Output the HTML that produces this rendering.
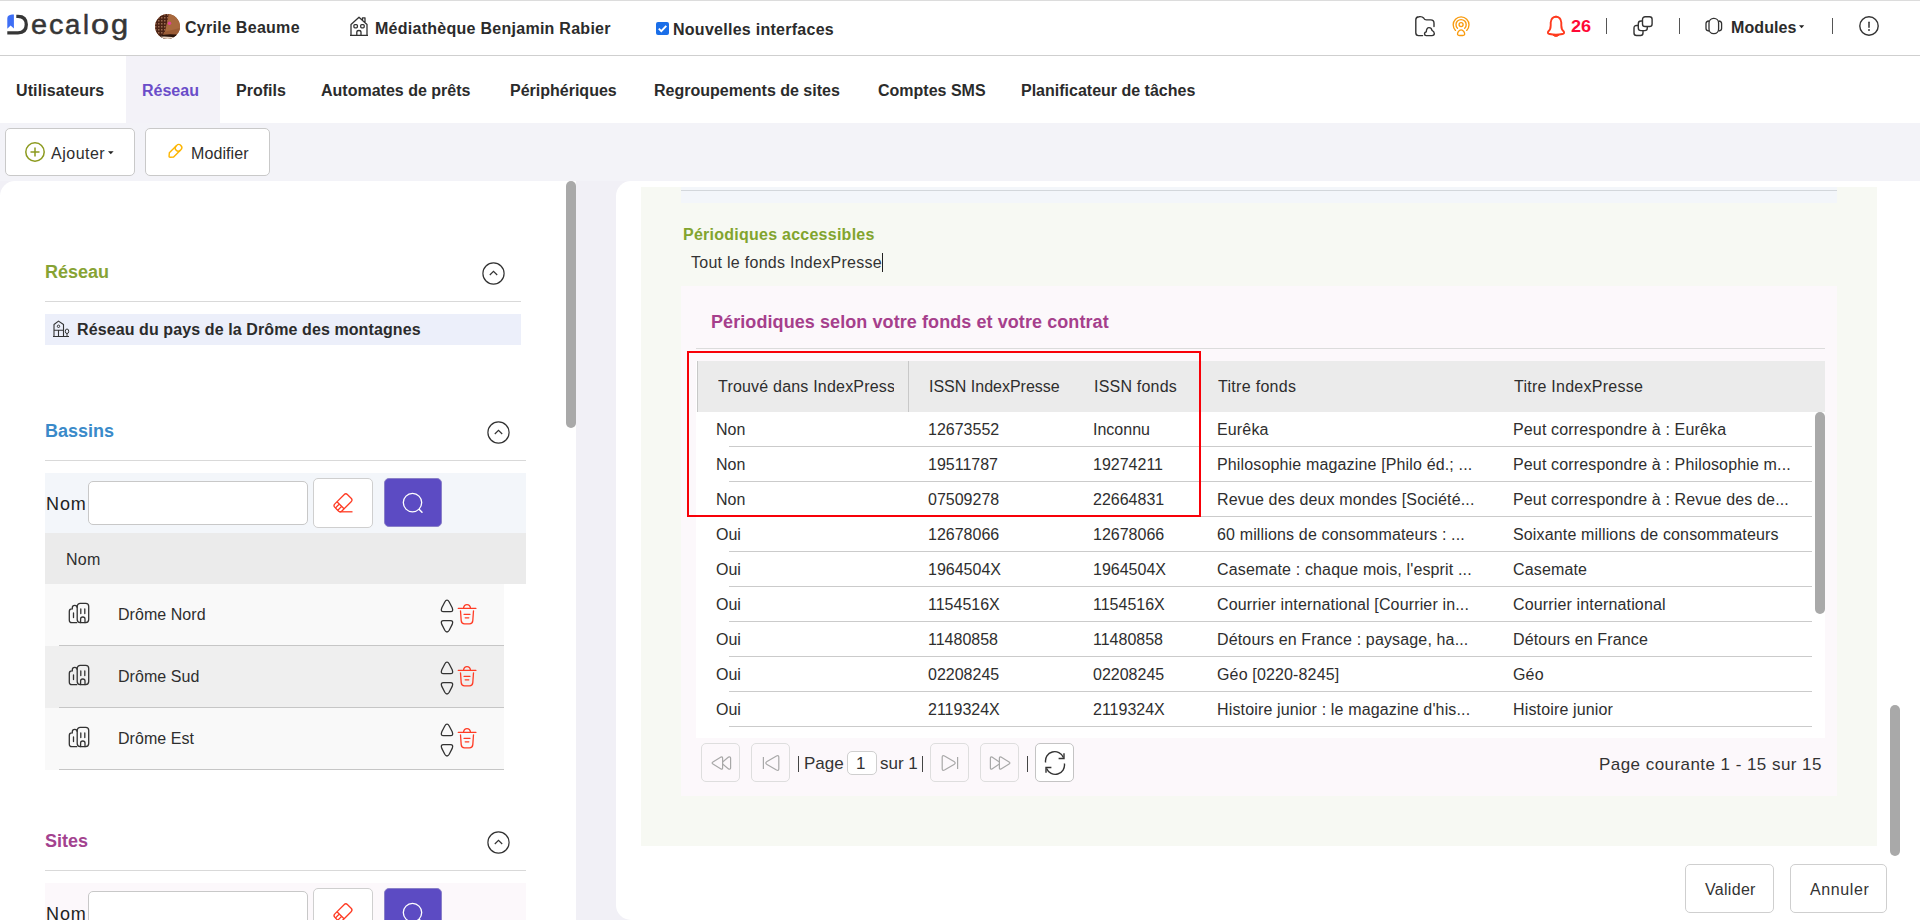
<!DOCTYPE html>
<html><head><meta charset="utf-8">
<style>
*{box-sizing:border-box;margin:0;padding:0}
html,body{width:1920px;height:920px;overflow:hidden;background:#f1f0f6;font-family:"Liberation Sans",sans-serif;color:#2e2e2e}
.a{position:absolute}
.t{position:absolute;white-space:nowrap;line-height:1}
svg{position:absolute;overflow:visible}
#hdr{left:0;top:0;width:1920px;height:56px;background:#fff;border-top:1px solid #dcdcdc;border-bottom:1px solid #cfcfcf}
#tabs{left:0;top:56px;width:1920px;height:67px;background:#fff}
#tb{left:0;top:123px;width:1920px;height:58px;background:#f3f3f8}
.btn{position:absolute;background:#fff;border:1px solid #c9c9c9;border-radius:5px}
#lp{left:0;top:181px;width:576px;height:739px;background:#fff;border-top-left-radius:15px}
#rp{left:616px;top:181px;width:1304px;height:739px;background:#fff;border-top-left-radius:15px;border-bottom-left-radius:15px}
.tab{font-size:16px;font-weight:bold;top:82.5px;color:#2b2b2b}
.hb{font-size:16px;font-weight:bold;color:#2b2b2b}
.sec{font-size:18px;font-weight:bold}
.hl{position:absolute;height:1px;background:#d9d9d9}
.row{position:absolute;left:45px;width:459px;height:62px;background:#f9f9f9}
.rl{position:absolute;left:59px;width:445px;height:1px;background:#c6c6c6}
.c{position:absolute;font-size:16px;white-space:nowrap;line-height:1;color:#2e2e2e}
.tl{position:absolute;left:729px;width:1083px;height:1px;background:#cbcbcb}
.pb{position:absolute;top:743px;width:39px;height:39px;border:1px solid #dedede;border-radius:5px;background:#fcf8fb}
.lg{position:absolute;top:12px;font-size:27px;line-height:1;color:#363636;-webkit-text-stroke:0.5px #363636}
</style></head><body>
<!-- ============ HEADER ============ -->
<div id="hdr" class="a"></div>
<!-- logo -->
<svg style="left:0;top:0" width="40" height="50">
  <path d="M7.3 28.8 L7.3 18.5 Q7.3 15 12 14.6 L13.9 14.6 L13.9 28.5 L10.6 25.6 Z" fill="#3d6ef5"/>
  <path d="M16.3 16.3 L18 16.3 Q26.3 16.3 26.3 24.6 Q26.3 32.9 18 32.9 L7.3 32.9" fill="none" stroke="#363636" stroke-width="3.3"/>
</svg>
<span class="lg" style="left:31px;transform:scaleX(1.07);transform-origin:left">e</span>
<span class="lg" style="left:49px;transform:scaleX(1.07);transform-origin:left">c</span>
<span class="lg" style="left:65px;transform:scaleX(1.02);transform-origin:left">a</span>
<span class="lg" style="left:83px;top:12px">l</span>
<span class="lg" style="left:91px;transform:scaleX(1.2);transform-origin:left">o</span>
<span class="lg" style="left:111px;transform:scaleX(1.14);transform-origin:left">g</span>
<!-- avatar -->
<svg style="left:155px;top:14px" width="25" height="25" viewBox="0 0 25 25">
  <defs><clipPath id="av"><circle cx="12.5" cy="12.5" r="12.4"/></clipPath>
  <pattern id="spr" width="3" height="3" patternUnits="userSpaceOnUse"><rect width="3" height="3" fill="#4a2214"/><rect x="0" y="0" width="1.5" height="1.5" fill="#9a6a50"/></pattern></defs>
  <g clip-path="url(#av)">
    <rect width="25" height="25" fill="#8a4c2a"/>
    <path d="M0 0 H14 L10 18 L12 25 H0 Z" fill="url(#spr)"/>
    <path d="M10 18 L14 0 H20 L25 6 V19 L16 21 Z" fill="#a8693e"/>
    <path d="M9 18 L25 14 V18 L16 22 L8 21 Z" fill="#9b5c35"/>
    <path d="M3 22 Q12 19 25 21 V25 H0 Z" fill="#2a140a"/>
    <path d="M0 23.5 Q10 21 25 24.5 V25 H0 Z" fill="#e6d2c0"/>
    <circle cx="14.5" cy="9.3" r="1.7" fill="#e0409a"/>
  </g>
</svg>
<div class="t hb" style="left:185px;top:20px;letter-spacing:0.28px">Cyrile Beaume</div>
<!-- house icon -->
<svg style="left:349px;top:16px" width="20" height="20" viewBox="0 0 20 20">
  <path d="M1 19.3 H19 M2 19.3 V8.5 L10 1.3 L18 8.5 V19.3 M13.5 4.5 V1.8 H16 V6.8" fill="none" stroke="#333" stroke-width="1.3" stroke-linejoin="round"/>
  <rect x="4.9" y="8.6" width="3.5" height="3.2" rx="1" fill="none" stroke="#333" stroke-width="1.3"/>
  <rect x="11.7" y="8.6" width="3.5" height="3.2" rx="1" fill="none" stroke="#333" stroke-width="1.3"/>
  <path d="M7.8 19.3 V16.3 Q7.8 14.5 9.9 14.5 Q12 14.5 12 16.3 V19.3" fill="none" stroke="#333" stroke-width="1.3"/>
</svg>
<div class="t hb" style="left:375px;top:21px;letter-spacing:0.27px">Médiathèque Benjamin Rabier</div>
<!-- checkbox -->
<svg style="left:656px;top:22px" width="13" height="13" viewBox="0 0 13 13">
  <rect x="0" y="0" width="13" height="13" rx="2" fill="#1a6ee8"/>
  <path d="M2.8 6.6 L5.3 9.1 L10.3 3.8" fill="none" stroke="#fff" stroke-width="1.9"/>
</svg>
<div class="t hb" style="left:673px;top:22px;letter-spacing:0.27px">Nouvelles interfaces</div>

<!-- folder cloud -->
<svg style="left:1410px;top:12px" width="30" height="30" viewBox="0 0 30 30">
  <path d="M12.6 35.5" />
  <path d="M12.5 35.3" />
  <path d="M12.6 23.6 H8.5 Q5.8 23.6 5.8 20.8 V7.8 Q5.8 4.9 9 4.7 Q12.3 4.3 13.6 6 Q14.6 7.9 16.4 7.9 H20.8 Q24 7.9 24 11.2 V14.6" fill="none" stroke="#333" stroke-width="1.4" stroke-linecap="round"/>
  <path d="M16.2 23.6 Q14.5 23.6 14.5 21.8 Q14.5 20.2 16.3 19.8 Q16.5 15.6 19 15.6 Q21.5 15.6 22 18.4 Q24.3 19.6 24.3 21.5 Q24.3 23.6 22 23.6 Z" fill="none" stroke="#333" stroke-width="1.4" stroke-linejoin="round"/>
</svg>
<!-- podcast orange -->
<svg style="left:1450px;top:14px" width="22" height="24" viewBox="0 0 22 24">
  <path d="M5.5 16.4 A7.9 7.9 0 1 1 16.7 16.4" fill="none" stroke="#f99b0e" stroke-width="1.35" stroke-linecap="round"/>
  <path d="M7.5 14.3 A5.1 5.1 0 1 1 14.7 14.3" fill="none" stroke="#f99b0e" stroke-width="1.35" stroke-linecap="round"/>
  <circle cx="11.1" cy="10.6" r="2" fill="none" stroke="#f99b0e" stroke-width="1.35"/>
  <path d="M11.1 15.8 Q9.5 15.8 8.3 17.6 Q7.3 19.3 7.6 20.6 Q8 21.5 9.5 21.5 H12.7 Q14.2 21.5 14.6 20.6 Q14.9 19.3 13.9 17.6 Q12.7 15.8 11.1 15.8 Z" fill="none" stroke="#f99b0e" stroke-width="1.35"/>
</svg>
<!-- bell -->
<svg style="left:1546px;top:15px" width="20" height="22" viewBox="0 0 20 22">
  <path d="M10 1.8 Q5.3 1.8 4.7 7.5 V10.5 Q4.7 14.5 2.2 16.5 Q1.2 18.6 3.6 19 Q10 20.6 16.4 19 Q18.8 18.6 17.8 16.5 Q15.3 14.5 15.3 10.5 V7.5 Q14.7 1.8 10 1.8 Z" fill="none" stroke="#ff3a1e" stroke-width="1.9" stroke-linejoin="round"/>
  <path d="M7 20 Q7.8 21.4 10 21.4 Q12.2 21.4 13 20 Z" fill="#ff3a1e" stroke="#ff3a1e" stroke-width="1"/>
  <ellipse cx="10" cy="1.6" rx="1.6" ry="0.9" fill="#ff3a1e"/>
</svg>
<div class="t" style="left:1571px;top:19px;font-size:16px;font-weight:bold;color:#ff0a36;transform:scaleX(1.13);transform-origin:left">26</div>
<div class="a" style="left:1606px;top:18px;width:1.3px;height:16px;background:#555"></div>
<!-- copy icon -->
<svg style="left:1633px;top:16px" width="21" height="21" viewBox="0 0 21 21">
  <path d="M5 9.5 H3.5 Q1 9.5 1 12 V17 Q1 19.5 3.5 19.5 H7.5 Q10 19.5 10 17 V14.5" fill="none" stroke="#333" stroke-width="1.4"/>
  <path d="M9.5 5 H8 Q5.3 5 5.3 7.7 V12 Q5.3 14.6 8 14.6 H11.8 Q14.3 14.6 14.3 12 V10.5" fill="none" stroke="#333" stroke-width="1.4"/>
  <rect x="9.5" y="0.7" width="9.6" height="9.8" rx="2.6" fill="none" stroke="#333" stroke-width="1.4"/>
</svg>
<div class="a" style="left:1679px;top:18px;width:1.3px;height:16px;background:#555"></div>
<!-- modules icon -->
<svg style="left:1705px;top:17px" width="18" height="18" viewBox="0 0 18 18">
  <rect x="4" y="1.3" width="9.6" height="15.3" rx="4.6" fill="none" stroke="#333" stroke-width="1.3"/>
  <path d="M4 4 Q1 4.3 1 6.5 V11.5 Q1 13.7 4 14 M13.6 4 Q16.6 4.3 16.6 6.5 V11.5 Q16.6 13.7 13.6 14" fill="none" stroke="#333" stroke-width="1.3"/>
</svg>
<div class="t hb" style="left:1731px;top:20px;letter-spacing:0.1px">Modules</div>
<svg style="left:1799px;top:25px" width="6" height="4" viewBox="0 0 6 4"><path d="M0 0.2 H5.2 L2.6 3.2 Z" fill="#222"/></svg>
<div class="a" style="left:1832px;top:18px;width:1.3px;height:16px;background:#555"></div>
<!-- info -->
<svg style="left:1859px;top:16px" width="20" height="20" viewBox="0 0 20 20">
  <circle cx="10" cy="10" r="9.2" fill="none" stroke="#333" stroke-width="1.4"/>
  <path d="M10 6.3 V11.3" stroke="#333" stroke-width="1.5" stroke-linecap="round"/>
  <circle cx="10" cy="14" r="0.95" fill="#333"/>
</svg>

<!-- ============ TABS ============ -->
<div id="tabs" class="a"></div>
<div class="a" style="left:126px;top:56px;width:94px;height:67px;background:#f3f2f8"></div>
<div class="t tab" style="left:16px;letter-spacing:0.1px">Utilisateurs</div>
<div class="t tab" style="left:142px;color:#6a4dc9">Réseau</div>
<div class="t tab" style="left:236px">Profils</div>
<div class="t tab" style="left:321px">Automates de prêts</div>
<div class="t tab" style="left:510px">Périphériques</div>
<div class="t tab" style="left:654px">Regroupements de sites</div>
<div class="t tab" style="left:878px">Comptes SMS</div>
<div class="t tab" style="left:1021px">Planificateur de tâches</div>

<!-- ============ TOOLBAR ============ -->
<div id="tb" class="a"></div>
<div class="btn" style="left:5px;top:128px;width:130px;height:48px"></div>
<svg style="left:25px;top:142px" width="20" height="20" viewBox="0 0 20 20">
  <circle cx="10" cy="10" r="9.2" fill="none" stroke="#8c9a1e" stroke-width="1.5"/>
  <path d="M10 5.5 V14.5 M5.5 10 H14.5" stroke="#8c9a1e" stroke-width="1.5"/>
</svg>
<div class="t" style="left:51px;top:146px;font-size:16px;letter-spacing:0.5px">Ajouter</div>
<svg style="left:108px;top:151px" width="6" height="4" viewBox="0 0 6 4"><path d="M0 0.3 H5.6 L2.8 3.3 Z" fill="#222"/></svg>
<div class="btn" style="left:145px;top:128px;width:125px;height:48px"></div>
<svg style="left:165px;top:141px" width="20" height="20" viewBox="0 0 20 20">
  <g transform="rotate(-45 10 10.3)" fill="none" stroke="#fdb500" stroke-width="1.4">
    <path d="M5 7.3 H15.3 A3 3 0 0 1 15.3 13.3 H5 L2.3 11 Q1.6 10.3 2.3 9.6 Z"/>
    <path d="M14.6 7.3 A3 3 0 0 0 14.6 13.3"/>
  </g>
</svg>
<div class="t" style="left:191px;top:146px;font-size:16px;letter-spacing:0.1px">Modifier</div>

<!-- ============ LEFT PANEL ============ -->
<div id="lp" class="a"></div>
<div class="a" style="left:566px;top:181px;width:10px;height:247px;background:#a9a9a9;border-radius:5px"></div>
<!-- Reseau section -->
<div class="t sec" style="left:45px;top:263px;color:#87a334">Réseau</div>
<svg style="left:482px;top:262px" width="23" height="23" viewBox="0 0 23 23">
  <circle cx="11.5" cy="11.5" r="10.6" fill="none" stroke="#333" stroke-width="1.2"/>
  <path d="M7.8 13 L11.5 9.4 L15.2 13" fill="none" stroke="#333" stroke-width="1.2"/>
</svg>
<div class="hl" style="left:45px;top:301px;width:476px"></div>
<div class="a" style="left:45px;top:314px;width:476px;height:31px;background:#eceffa"></div>
<svg style="left:52px;top:320px" width="19" height="18" viewBox="0 0 19 18">
  <path d="M1 16.5 H17 M2 16.5 V4.5 L6.5 1.1 L11.5 4.5 V16.5 M2 10.3 H11.5 M6.5 10.3 V16.5" fill="none" stroke="#333" stroke-width="1.1" stroke-linejoin="round"/>
  <circle cx="6.5" cy="6.3" r="1.2" fill="none" stroke="#333" stroke-width="1"/>
  <ellipse cx="15" cy="11.3" rx="1.7" ry="2.3" fill="none" stroke="#333" stroke-width="1"/>
  <path d="M15 13.6 V16.5" stroke="#333" stroke-width="1"/>
</svg>
<div class="t" style="left:77px;top:322px;font-size:16px;font-weight:bold;color:#2b2b2b;letter-spacing:0.1px">Réseau du pays de la Drôme des montagnes</div>

<!-- Bassins section -->
<div class="t sec" style="left:45px;top:422px;color:#3a8ac9">Bassins</div>
<svg style="left:487px;top:421px" width="23" height="23" viewBox="0 0 23 23">
  <circle cx="11.5" cy="11.5" r="10.6" fill="none" stroke="#333" stroke-width="1.2"/>
  <path d="M7.8 13 L11.5 9.4 L15.2 13" fill="none" stroke="#333" stroke-width="1.2"/>
</svg>
<div class="hl" style="left:45px;top:460px;width:481px"></div>
<div class="a" style="left:45px;top:473px;width:481px;height:60px;background:#f3f6fa"></div>
<div class="t" style="left:46px;top:495px;font-size:18px;color:#222;letter-spacing:0.9px">Nom</div>
<div class="a" style="left:88px;top:481px;width:220px;height:44px;background:#fff;border:1px solid #c8c8c8;border-radius:5px"></div>
<div class="a" style="left:313px;top:478px;width:60px;height:50px;background:#fff;border:1px solid #cfcfcf;border-radius:5px"></div>
<svg style="left:330px;top:489px" width="26" height="26" viewBox="0 0 26 26">
  <g transform="rotate(-45 13 13.8)" fill="none" stroke="#ff3b24" stroke-width="1.3">
   <rect x="4" y="8.8" width="18" height="10" rx="2.5"/>
   <path d="M9.5 8.8 V18.8 M4 12.1 H9.5 M4 15.4 H9.5"/>
  </g>
  <path d="M9.5 22.8 H22.5" stroke="#ff3b24" stroke-width="1.3"/>
</svg>
<div class="a" style="left:384px;top:478px;width:58px;height:49px;background:#5c4bc3;border:1px solid #8a80c8;border-radius:5px"></div>
<svg style="left:402px;top:492px" width="22" height="22" viewBox="0 0 22 22">
  <circle cx="10.5" cy="10.6" r="9.2" fill="none" stroke="#fff" stroke-width="1.3"/>
  <path d="M17.3 17.5 L20 20.2" stroke="#fff" stroke-width="1.5" stroke-linecap="round"/>
</svg>
<div class="a" style="left:45px;top:533px;width:481px;height:51px;background:#ebebeb"></div>
<div class="t" style="left:66px;top:552px;font-size:16px;color:#2e2e2e;letter-spacing:0.3px">Nom</div>
<div class="row" style="top:584px;background:#f9f9f9"></div>
<div class="rl" style="top:645px"></div>
<svg style="left:68px;top:602px" width="22" height="22" viewBox="0 0 22 22">
  <path d="M9.2 20.6 H3.8 Q1.3 20.6 1.3 18 V9.5 Q1.3 6.9 3.8 6.9 H4.3 V5.8 Q4.3 3.3 6.7 3.3 Q9.2 3.3 9.2 5.8" fill="none" stroke="#333" stroke-width="1.3"/>
  <rect x="9.2" y="1.3" width="11.5" height="19.3" rx="3" fill="none" stroke="#333" stroke-width="1.3"/>
  <path d="M5.5 11 V15.5 M12.8 7 V11.5 M16.8 7 V11.5 M12.6 20.6 V17 Q12.6 15 14.8 15 Q17 15 17 17 V20.6" fill="none" stroke="#333" stroke-width="1.3" stroke-linecap="round"/>
</svg>
<div class="c" style="left:118px;top:607px;letter-spacing:0.05px">Drôme Nord</div>
<svg style="left:439px;top:599px" width="16" height="35" viewBox="0 0 16 35">
  <path d="M8 1.2 Q6.8 1.2 5.8 3 L2.8 8.8 Q1.3 12.6 4.5 12.6 H11.5 Q14.7 12.6 13.2 8.8 L10.2 3 Q9.2 1.2 8 1.2 Z" fill="none" stroke="#333" stroke-width="1.3"/>
  <path d="M8 33 Q6.8 33 5.8 31.2 L2.8 25.4 Q1.3 21.6 4.5 21.6 H11.5 Q14.7 21.6 13.2 25.4 L10.2 31.2 Q9.2 33 8 33 Z" fill="none" stroke="#333" stroke-width="1.3"/>
</svg>
<svg style="left:457px;top:603px" width="20" height="22" viewBox="0 0 20 22">
  <path d="M1.3 5.4 H18.9 M6.5 5.2 Q7 1.6 10 1.6 Q13 1.6 13.5 5.2 M3.5 7.8 L4.2 17.6 Q4.5 20.8 7.5 20.8 H12.5 Q15.5 20.8 15.8 17.6 L16.5 7.8 M7 11.3 H13 M8.2 14.8 H11.8" fill="none" stroke="#ff3b24" stroke-width="1.3" stroke-linecap="round"/>
</svg>
<div class="row" style="top:646px;background:#efefef"></div>
<div class="rl" style="top:707px"></div>
<svg style="left:68px;top:664px" width="22" height="22" viewBox="0 0 22 22">
  <path d="M9.2 20.6 H3.8 Q1.3 20.6 1.3 18 V9.5 Q1.3 6.9 3.8 6.9 H4.3 V5.8 Q4.3 3.3 6.7 3.3 Q9.2 3.3 9.2 5.8" fill="none" stroke="#333" stroke-width="1.3"/>
  <rect x="9.2" y="1.3" width="11.5" height="19.3" rx="3" fill="none" stroke="#333" stroke-width="1.3"/>
  <path d="M5.5 11 V15.5 M12.8 7 V11.5 M16.8 7 V11.5 M12.6 20.6 V17 Q12.6 15 14.8 15 Q17 15 17 17 V20.6" fill="none" stroke="#333" stroke-width="1.3" stroke-linecap="round"/>
</svg>
<div class="c" style="left:118px;top:669px;letter-spacing:0.05px">Drôme Sud</div>
<svg style="left:439px;top:661px" width="16" height="35" viewBox="0 0 16 35">
  <path d="M8 1.2 Q6.8 1.2 5.8 3 L2.8 8.8 Q1.3 12.6 4.5 12.6 H11.5 Q14.7 12.6 13.2 8.8 L10.2 3 Q9.2 1.2 8 1.2 Z" fill="none" stroke="#333" stroke-width="1.3"/>
  <path d="M8 33 Q6.8 33 5.8 31.2 L2.8 25.4 Q1.3 21.6 4.5 21.6 H11.5 Q14.7 21.6 13.2 25.4 L10.2 31.2 Q9.2 33 8 33 Z" fill="none" stroke="#333" stroke-width="1.3"/>
</svg>
<svg style="left:457px;top:665px" width="20" height="22" viewBox="0 0 20 22">
  <path d="M1.3 5.4 H18.9 M6.5 5.2 Q7 1.6 10 1.6 Q13 1.6 13.5 5.2 M3.5 7.8 L4.2 17.6 Q4.5 20.8 7.5 20.8 H12.5 Q15.5 20.8 15.8 17.6 L16.5 7.8 M7 11.3 H13 M8.2 14.8 H11.8" fill="none" stroke="#ff3b24" stroke-width="1.3" stroke-linecap="round"/>
</svg>
<div class="row" style="top:708px;background:#f9f9f9"></div>
<div class="rl" style="top:769px"></div>
<svg style="left:68px;top:726px" width="22" height="22" viewBox="0 0 22 22">
  <path d="M9.2 20.6 H3.8 Q1.3 20.6 1.3 18 V9.5 Q1.3 6.9 3.8 6.9 H4.3 V5.8 Q4.3 3.3 6.7 3.3 Q9.2 3.3 9.2 5.8" fill="none" stroke="#333" stroke-width="1.3"/>
  <rect x="9.2" y="1.3" width="11.5" height="19.3" rx="3" fill="none" stroke="#333" stroke-width="1.3"/>
  <path d="M5.5 11 V15.5 M12.8 7 V11.5 M16.8 7 V11.5 M12.6 20.6 V17 Q12.6 15 14.8 15 Q17 15 17 17 V20.6" fill="none" stroke="#333" stroke-width="1.3" stroke-linecap="round"/>
</svg>
<div class="c" style="left:118px;top:731px;letter-spacing:0.05px">Drôme Est</div>
<svg style="left:439px;top:723px" width="16" height="35" viewBox="0 0 16 35">
  <path d="M8 1.2 Q6.8 1.2 5.8 3 L2.8 8.8 Q1.3 12.6 4.5 12.6 H11.5 Q14.7 12.6 13.2 8.8 L10.2 3 Q9.2 1.2 8 1.2 Z" fill="none" stroke="#333" stroke-width="1.3"/>
  <path d="M8 33 Q6.8 33 5.8 31.2 L2.8 25.4 Q1.3 21.6 4.5 21.6 H11.5 Q14.7 21.6 13.2 25.4 L10.2 31.2 Q9.2 33 8 33 Z" fill="none" stroke="#333" stroke-width="1.3"/>
</svg>
<svg style="left:457px;top:727px" width="20" height="22" viewBox="0 0 20 22">
  <path d="M1.3 5.4 H18.9 M6.5 5.2 Q7 1.6 10 1.6 Q13 1.6 13.5 5.2 M3.5 7.8 L4.2 17.6 Q4.5 20.8 7.5 20.8 H12.5 Q15.5 20.8 15.8 17.6 L16.5 7.8 M7 11.3 H13 M8.2 14.8 H11.8" fill="none" stroke="#ff3b24" stroke-width="1.3" stroke-linecap="round"/>
</svg>

<!-- Sites section -->
<div class="t sec" style="left:45px;top:832px;color:#a3428f">Sites</div>
<svg style="left:487px;top:831px" width="23" height="23" viewBox="0 0 23 23">
  <circle cx="11.5" cy="11.5" r="10.6" fill="none" stroke="#333" stroke-width="1.2"/>
  <path d="M7.8 13 L11.5 9.4 L15.2 13" fill="none" stroke="#333" stroke-width="1.2"/>
</svg>
<div class="hl" style="left:45px;top:870px;width:481px"></div>
<div class="a" style="left:45px;top:883px;width:481px;height:60px;background:#fcf8fb"></div>
<div class="t" style="left:46px;top:905px;font-size:18px;color:#222;letter-spacing:0.9px">Nom</div>
<div class="a" style="left:88px;top:891px;width:220px;height:44px;background:#fff;border:1px solid #c8c8c8;border-radius:5px"></div>
<div class="a" style="left:313px;top:888px;width:60px;height:50px;background:#fff;border:1px solid #cfcfcf;border-radius:5px"></div>
<svg style="left:330px;top:899px" width="26" height="26" viewBox="0 0 26 26">
  <g transform="rotate(-45 13 13.8)" fill="none" stroke="#ff3b24" stroke-width="1.3">
   <rect x="4" y="8.8" width="18" height="10" rx="2.5"/>
   <path d="M9.5 8.8 V18.8 M4 12.1 H9.5 M4 15.4 H9.5"/>
  </g>
  <path d="M9.5 22.8 H22.5" stroke="#ff3b24" stroke-width="1.3"/>
</svg>
<div class="a" style="left:384px;top:888px;width:58px;height:49px;background:#5c4bc3;border:1px solid #8a80c8;border-radius:5px"></div>
<svg style="left:402px;top:902px" width="22" height="22" viewBox="0 0 22 22">
  <circle cx="10.5" cy="10.6" r="9.2" fill="none" stroke="#fff" stroke-width="1.3"/>
  <path d="M17.3 17.5 L20 20.2" stroke="#fff" stroke-width="1.5" stroke-linecap="round"/>
</svg>
<!-- ============ RIGHT PANEL ============ -->
<div id="rp" class="a"></div>
<div class="a" style="left:641px;top:187px;width:1236px;height:659px;background:#f7f9f3"></div>
<div class="a" style="left:681px;top:187px;width:1156px;height:16px;background:#f3f6fa"></div>
<div class="a" style="left:681px;top:190px;width:1156px;height:1px;background:#d3d7db"></div>
<div class="t" style="left:683px;top:226.5px;font-size:16px;font-weight:bold;color:#82a42e;letter-spacing:0.25px">Périodiques accessibles</div>
<div class="t" style="left:691px;top:255px;font-size:16px;color:#333;letter-spacing:0.27px">Tout le fonds IndexPresse</div>
<div class="a" style="left:882px;top:253px;width:1px;height:19px;background:#222"></div>
<div class="a" style="left:681px;top:286px;width:1156px;height:510px;background:#fcf8fb"></div>
<div class="t" style="left:711px;top:313px;font-size:18px;font-weight:bold;color:#a63f8c;letter-spacing:0.08px">Périodiques selon votre fonds et votre contrat</div>
<div class="a" style="left:696px;top:348px;width:1129px;height:1px;background:#dcdcdc"></div>
<div class="a" style="left:696px;top:361px;width:1129px;height:377px;background:#fff"></div>
<div class="a" style="left:697px;top:361px;width:1128px;height:51px;background:#ebebeb;border-left:1px solid #c8c8c8"></div>
<div class="a" style="left:908px;top:361px;width:1px;height:51px;background:#c8c8c8"></div>
<div class="c" style="left:718px;top:379px;width:176px;overflow:hidden;letter-spacing:0.2px">Trouvé dans IndexPresse</div>
<div class="c" style="left:929px;top:379px">ISSN IndexPresse</div>
<div class="c" style="left:1094px;top:379px;letter-spacing:0.2px">ISSN fonds</div>
<div class="c" style="left:1218px;top:379px;letter-spacing:0.3px">Titre fonds</div>
<div class="c" style="left:1514px;top:379px;letter-spacing:0.25px">Titre IndexPresse</div>
<div class="c" style="left:716px;top:422px">Non</div><div class="c" style="left:928px;top:422px">12673552</div><div class="c" style="left:1093px;top:422px">Inconnu</div><div class="c" style="left:1217px;top:422px;letter-spacing:0.15px">Eurêka</div><div class="c" style="left:1513px;top:422px;letter-spacing:0.15px">Peut correspondre à : Eurêka</div><div class="tl" style="top:446px"></div>
<div class="c" style="left:716px;top:457px">Non</div><div class="c" style="left:928px;top:457px">19511787</div><div class="c" style="left:1093px;top:457px">19274211</div><div class="c" style="left:1217px;top:457px;letter-spacing:0.15px">Philosophie magazine [Philo éd.; ...</div><div class="c" style="left:1513px;top:457px;letter-spacing:0.15px">Peut correspondre à : Philosophie m...</div><div class="tl" style="top:481px"></div>
<div class="c" style="left:716px;top:492px">Non</div><div class="c" style="left:928px;top:492px">07509278</div><div class="c" style="left:1093px;top:492px">22664831</div><div class="c" style="left:1217px;top:492px;letter-spacing:0.15px">Revue des deux mondes [Société...</div><div class="c" style="left:1513px;top:492px;letter-spacing:0.15px">Peut correspondre à : Revue des de...</div><div class="tl" style="top:516px"></div>
<div class="c" style="left:716px;top:527px">Oui</div><div class="c" style="left:928px;top:527px">12678066</div><div class="c" style="left:1093px;top:527px">12678066</div><div class="c" style="left:1217px;top:527px;letter-spacing:0.15px">60 millions de consommateurs : ...</div><div class="c" style="left:1513px;top:527px;letter-spacing:0.15px">Soixante millions de consommateurs</div><div class="tl" style="top:551px"></div>
<div class="c" style="left:716px;top:562px">Oui</div><div class="c" style="left:928px;top:562px">1964504X</div><div class="c" style="left:1093px;top:562px">1964504X</div><div class="c" style="left:1217px;top:562px;letter-spacing:0.15px">Casemate : chaque mois, l'esprit ...</div><div class="c" style="left:1513px;top:562px;letter-spacing:0.15px">Casemate</div><div class="tl" style="top:586px"></div>
<div class="c" style="left:716px;top:597px">Oui</div><div class="c" style="left:928px;top:597px">1154516X</div><div class="c" style="left:1093px;top:597px">1154516X</div><div class="c" style="left:1217px;top:597px;letter-spacing:0.15px">Courrier international [Courrier in...</div><div class="c" style="left:1513px;top:597px;letter-spacing:0.15px">Courrier international</div><div class="tl" style="top:621px"></div>
<div class="c" style="left:716px;top:632px">Oui</div><div class="c" style="left:928px;top:632px">11480858</div><div class="c" style="left:1093px;top:632px">11480858</div><div class="c" style="left:1217px;top:632px;letter-spacing:0.15px">Détours en France : paysage, ha...</div><div class="c" style="left:1513px;top:632px;letter-spacing:0.15px">Détours en France</div><div class="tl" style="top:656px"></div>
<div class="c" style="left:716px;top:667px">Oui</div><div class="c" style="left:928px;top:667px">02208245</div><div class="c" style="left:1093px;top:667px">02208245</div><div class="c" style="left:1217px;top:667px;letter-spacing:0.15px">Géo [0220-8245]</div><div class="c" style="left:1513px;top:667px;letter-spacing:0.15px">Géo</div><div class="tl" style="top:691px"></div>
<div class="c" style="left:716px;top:702px">Oui</div><div class="c" style="left:928px;top:702px">2119324X</div><div class="c" style="left:1093px;top:702px">2119324X</div><div class="c" style="left:1217px;top:702px;letter-spacing:0.15px">Histoire junior : le magazine d'his...</div><div class="c" style="left:1513px;top:702px;letter-spacing:0.15px">Histoire junior</div><div class="tl" style="top:726px"></div>
<div class="a" style="left:1815px;top:412px;width:10px;height:202px;background:#a9a9a9;border-radius:5px"></div>
<div class="a" style="left:687px;top:351px;width:514px;height:166px;border:2px solid #f80008"></div>
<!-- pagination -->
<div class="pb" style="left:701px"></div>
<div class="pb" style="left:751px"></div>
<div class="pb" style="left:930px"></div>
<div class="pb" style="left:980px"></div>
<div class="pb" style="left:1035px;border-color:#c4c4c4;background:#fff"></div>
<!-- pagination icons -->
<svg style="left:701px;top:743px" width="40" height="40" viewBox="0 0 40 40">
  <path d="M11.9 19 L20 14.1 Q21.6 13.3 21.6 15.1 V24.9 Q21.6 26.7 20 25.9 L11.9 21 Q10.3 20 11.9 19 Z" fill="none" stroke="#a8a8a8" stroke-width="1.2"/>
  <path d="M21.6 19 L27.5 14.1 Q29.6 13.3 29.6 15.1 V24.9 Q29.6 26.7 27.5 25.9 L21.6 21" fill="none" stroke="#a8a8a8" stroke-width="1.2"/>
</svg>
<svg style="left:751px;top:743px" width="40" height="40" viewBox="0 0 40 40">
  <path d="M12.4 14 V26" stroke="#a8a8a8" stroke-width="1.2"/>
  <path d="M16 18.6 L25.5 13 Q27.8 11.8 27.8 14.3 V25.7 Q27.8 28.2 25.5 27 L16 21.4 Q13.6 20 16 18.6 Z" fill="none" stroke="#a8a8a8" stroke-width="1.2"/>
</svg>
<svg style="left:930px;top:743px" width="40" height="40" viewBox="0 0 40 40">
  <path d="M27.6 14 V26" stroke="#a8a8a8" stroke-width="1.2"/>
  <path d="M24 18.6 L14.5 13 Q12.2 11.8 12.2 14.3 V25.7 Q12.2 28.2 14.5 27 L24 21.4 Q26.4 20 24 18.6 Z" fill="none" stroke="#a8a8a8" stroke-width="1.2"/>
</svg>
<svg style="left:980px;top:743px" width="40" height="40" viewBox="0 0 40 40">
  <path d="M29.1 19 L21 14.1 Q19.4 13.3 19.4 15.1 V24.9 Q19.4 26.7 21 25.9 L29.1 21 Q30.7 20 29.1 19 Z" fill="none" stroke="#a8a8a8" stroke-width="1.2"/>
  <path d="M19.4 19 L12 14.1 Q10.4 13.3 10.4 15.1 V24.9 Q10.4 26.7 12 25.9 L19.4 21" fill="none" stroke="#a8a8a8" stroke-width="1.2"/>
</svg>
<svg style="left:1035px;top:743px" width="40" height="40" viewBox="0 0 40 40">
  <path d="M10.6 19.5 A9.3 9.3 0 0 1 28.4 14.5 M29.4 20.5 A9.3 9.3 0 0 1 11.6 25.5" fill="none" stroke="#333" stroke-width="1.4"/>
  <path d="M29 10.2 V15.5 H23.6 M11 29.8 V24.5 H16.4" fill="none" stroke="#333" stroke-width="1.4"/>
</svg>
<div class="a" style="left:798px;top:756px;width:1px;height:16px;background:#444"></div>
<div class="t" style="left:804px;top:755px;font-size:17px;color:#333">Page</div>
<div class="a" style="left:847px;top:751px;width:30px;height:24px;border:1px solid #cfcfcf;border-radius:5px;background:#fff"></div>
<div class="t" style="left:856px;top:755px;font-size:17px;color:#333">1</div>
<div class="t" style="left:880px;top:755px;font-size:17px;color:#333">sur 1</div>
<div class="a" style="left:922px;top:756px;width:1px;height:16px;background:#444"></div>
<div class="a" style="left:1027px;top:756px;width:1px;height:16px;background:#444"></div>
<div class="t" style="left:1599px;top:756px;font-size:17px;color:#333;letter-spacing:0.45px">Page courante 1 - 15 sur 15</div>
<!-- outer scrollbar -->
<div class="a" style="left:1890px;top:705px;width:10px;height:151px;background:#a9a9a9;border-radius:5px"></div>
<div class="btn" style="left:1685px;top:864px;width:89px;height:49px;border-color:#cfcfcf"></div>
<div class="t" style="left:1705px;top:882px;font-size:16px;color:#333;letter-spacing:0.3px">Valider</div>
<div class="btn" style="left:1790px;top:864px;width:97px;height:49px;border-color:#cfcfcf"></div>
<div class="t" style="left:1810px;top:882px;font-size:16px;color:#333;letter-spacing:0.6px">Annuler</div>
</body></html>
